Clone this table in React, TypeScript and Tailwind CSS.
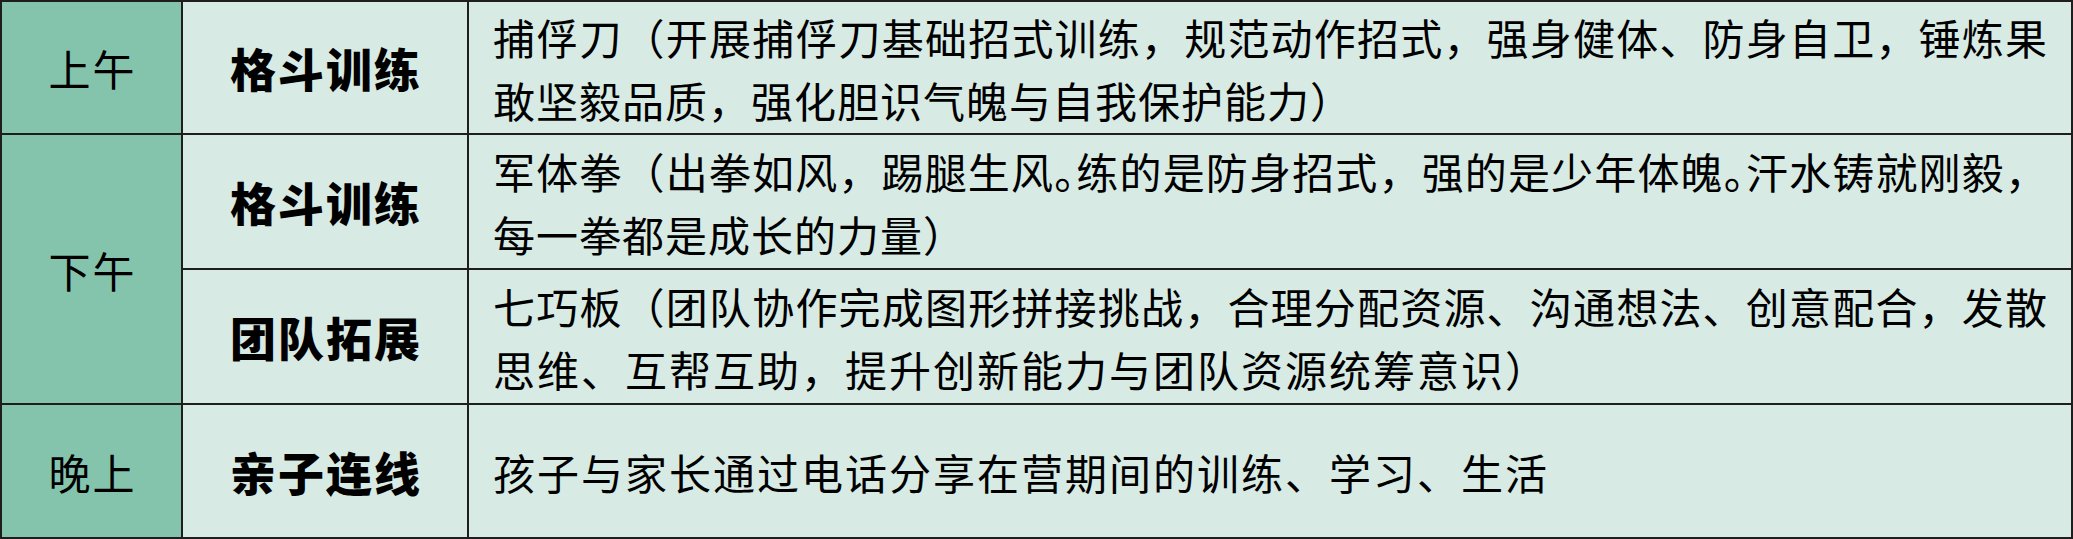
import React from "react";

const body = "font-['Noto_Sans_CJK_SC','Noto_Sans_CJK_JP',sans-serif]";

function Full({ children }: { children: React.ReactNode }) {
  return <div className="text-justify [text-align-last:justify] whitespace-nowrap">{children}</div>;
}

function Rest({ children, wide }: { children: React.ReactNode; wide?: boolean }) {
  return (
    <div className={wide ? "text-left tracking-[2px] whitespace-nowrap" : "text-left tracking-[1px] whitespace-nowrap"}>
      {children}
    </div>
  );
}

function Dot() {
  return <span className="tracking-[-0.5em]">。</span>;
}

export default function App() {
  const left = `bg-[#85c4ac] flex items-center justify-center text-[42px] font-normal text-black tracking-[2px] pl-[2px] ${body}`;
  const mid = `bg-[#d7eae4] flex items-center justify-center text-[46px] font-black text-black tracking-[2px] pl-[2px] ${body}`;
  const right = `bg-[#d7eae4] flex flex-col justify-center pl-[24px] pr-[24px] text-[42px] leading-[63px] text-black ${body}`;
  return (
    <div className="w-[2073px] h-[539px] bg-[#1e1e1e] p-[2px] grid grid-cols-[179px_284px_1fr] grid-rows-[131px_133px_133px_1fr] gap-[2px]">
      <div className={left}>上午</div>
      <div className={mid}>格斗训练</div>
      <div className={right}>
        <Full>捕俘刀（开展捕俘刀基础招式训练，规范动作招式，强身健体、防身自卫，锤炼果</Full>
        <Rest>敢坚毅品质，强化胆识气魄与自我保护能力）</Rest>
      </div>

      <div className={`${left} row-span-2`}>下午</div>
      <div className={mid}>格斗训练</div>
      <div className={right}>
        <Full>
          军体拳（出拳如风，踢腿生风<Dot />练的是防身招式，强的是少年体魄<Dot />汗水铸就刚毅，
        </Full>
        <Rest>每一拳都是成长的力量）</Rest>
      </div>

      <div className={mid}>团队拓展</div>
      <div className={right}>
        <Full>七巧板（团队协作完成图形拼接挑战，合理分配资源、沟通想法、创意配合，发散</Full>
        <Rest wide>思维、互帮互助，提升创新能力与团队资源统筹意识）</Rest>
      </div>

      <div className={left}>晚上</div>
      <div className={mid}>亲子连线</div>
      <div className={right}>
        <Rest wide>孩子与家长通过电话分享在营期间的训练、学习、生活</Rest>
      </div>
    </div>
  );
}
